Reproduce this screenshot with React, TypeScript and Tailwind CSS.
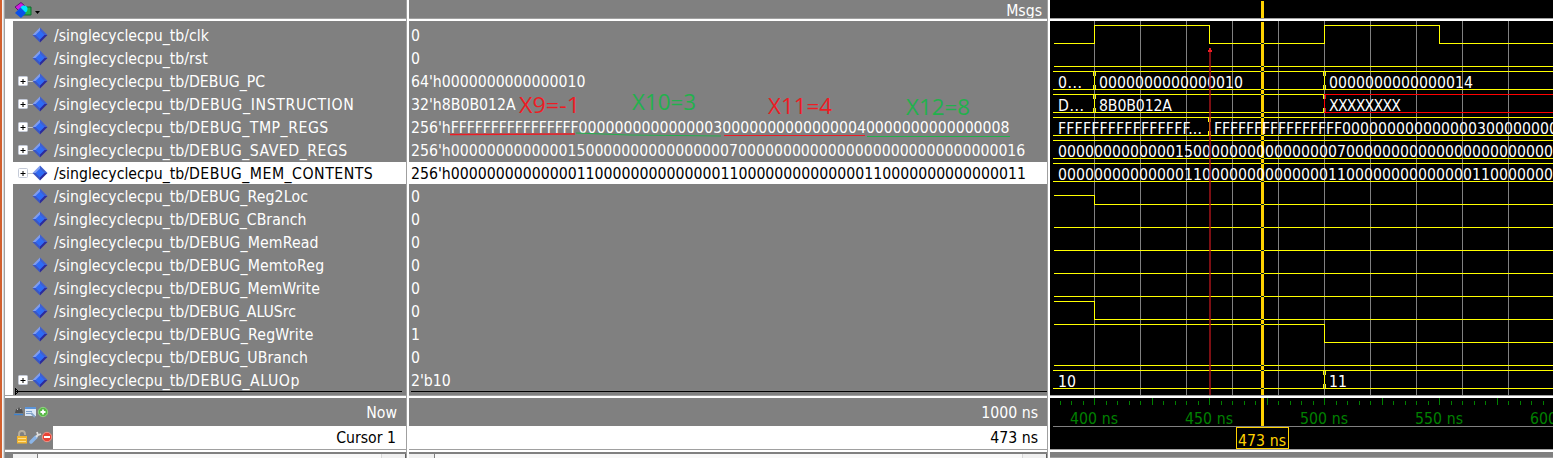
import React from "react";

const signals = [
  { name: "clk", track: "" },
  { name: "rst", track: "" },
  { name: "DEBUG_PC", track: "" },
  { name: "DEBUG_INSTRUCTION", track: "tracking-[0.64px]" },
  { name: "DEBUG_TMP_REGS", track: "tracking-[0.5px]" },
  { name: "DEBUG_SAVED_REGS", track: "tracking-[0.5px]" },
  { name: "DEBUG_MEM_CONTENTS", track: "tracking-[0.5px]" },
  { name: "DEBUG_Reg2Loc", track: "tracking-[0.12px]" },
  { name: "DEBUG_CBranch", track: "" },
  { name: "DEBUG_MemRead", track: "tracking-[0.14px]" },
  { name: "DEBUG_MemtoReg", track: "tracking-[0.14px]" },
  { name: "DEBUG_MemWrite", track: "tracking-[0.1px]" },
  { name: "DEBUG_ALUSrc", track: "" },
  { name: "DEBUG_RegWrite", track: "tracking-[0.2px]" },
  { name: "DEBUG_UBranch", track: "tracking-[0.08px]" },
  { name: "DEBUG_ALUOp", track: "tracking-[0.55px]" },
];
const word = (n: string) => n.padStart(16, "0");
const ones = "F".repeat(16);
const savedRegs = word("15").slice(1) + "0".repeat(15) + "07" + "0".repeat(30) + "16";
const memRegs = word("11").repeat(4);
const values: React.ReactNode[] = [
  "0", "0", "64'h0000000000000010", "32'h8B0B012A",
  <>256'h<span className="tracking-[-0.13px]">{ones}</span>{word("3") + word("4") + word("8")}</>,
  "256'h" + savedRegs, "256'h" + memRegs,
  "0", "0", "0", "0", "0", "0", "1", "0", "2'b10",
];
const expandable = [2, 3, 4, 5, 6, 15];

function Diamond() {
  return (
    <svg width="16" height="16" viewBox="0 0 16 16" className="-ml-px shrink-0">
      <path d="M8 .5 0.5 8 8 8z" fill="#7f9cf0" />
      <path d="M8 .5 15.5 8H8z" fill="#3f5fd0" />
      <path d="M.5 8 8 15.5V8z" fill="#3a55c4" />
      <path d="M15.5 8 8 15.5V8z" fill="#2b2a9c" />
      <path d="M8 3.5 12.5 8 8 12.5 3.5 8z" fill="#2f6bf5" />
    </svg>
  );
}

function Expander() {
  return (
    <svg width="16" height="12" viewBox="0 0 16 12" className="shrink-0">
      <rect x="0.5" y="1.5" width="9" height="9" rx="1" fill="#fff" stroke="#c5cbd8" />
      <path d="M2.500 6.500h5M5 4v5" stroke="#000" />
      <path d="M10 6.500h6" stroke="#c8c8c8" />
    </svg>
  );
}

const crossings = [22, 45, 50, 68, 73, 91, 96, 114, 119, 137, 142, 160, 183, 206, 229, 252, 275, 298, 303, 344, 349, 367];

function Wave() {
  const grid = Array.from({ length: 10 }, (_, i) => 44.5 + i * 46);
  const y = (i: number) => 23 * i;
  const bus = (i: number, key: string) => <path key={key} d={`M3 ${y(i) + 4.5}H503M3 ${y(i) + 22.5}H503`} />;
  const edge = (x: number, i: number, right = "#ff0") => (
    <g key={`${x}-${i}`}>
      <path d={`M${x} ${y(i) + 4}V${y(i) + 23}`} stroke={right} />
      <path d={`M${x - 1} ${y(i) + 5}v4M${x - 1} ${y(i) + 18}v4`} stroke="#ff0" />
      <path d={`M${x + 1} ${y(i) + 5}v4M${x + 1} ${y(i) + 18}v4`} stroke={right} />
      <path d={`M${x} ${y(i) + 5}v4M${x} ${y(i) + 18}v4`} stroke="#808080" />
    </g>
  );
  const label = (x: number, i: number, t: string, w: number) => (
    <text x={x} y={y(i) + 21} textLength={w} key={`${x}-${t}`}>{t}</text>
  );
  return (
    <svg width="503" height="374" viewBox="0 0 503 374" className="block" shapeRendering="crispEdges">
      <rect width="503" height="374" fill="#000" />
      <g stroke="#808080">{grid.map((x) => <path key={x} d={`M${x} 0V374`} />)}</g>
      <g fill="none" stroke="#ff0">
        <path d="M4 22.5H44.5V4.5H159.5V22.5H274.5V4.5H389.5V22.5H503" />
        <path d="M4 45.5H503" />
        {[2, 4, 5, 6, 15].map((i) => bus(i, `b${i}`))}
        <path d="M3 73.5H274M3 91.5H274" />
        <path d="M4 174.5H44.5V183.5H503M4 206.5H503M4 229.5H503M4 252.5H503M4 275.5H503M4 280.5H44.5V298.5H503M4 303.5H274.5V321.5H503M4 344.5H503" />
        <path d="M503 73.5H274.5V91.5H503" stroke="#f00" />
      </g>
      <path d="M212.500 1V374" stroke="#ffd200" strokeWidth="3" />
      <g fill="#001c2a">{crossings.map((c) => <rect key={c} x="211" y={c} width="3" height="1" />)}</g>
      <g fill="#fff" fontSize="15.7">
        {label(8, 2, "0...", 24)}
        {label(49, 2, word("10"), 144)}
        {label(279, 2, word("14"), 144)}
        {label(8, 3, "D...", 26)}
        {label(49, 3, "8B0B012A", 73)}
        {label(279, 3, "XXXXXXXX", 72)}
        {label(8, 4, ones + "...", 144)}
        {label(164, 4, ones, 128)}
        {label(292, 4, word("3") + "0".repeat(8), 216)}
        {label(8, 5, savedRegs.slice(0, 55), 495)}
        {label(8, 6, memRegs.slice(0, 55), 495)}
        {label(8, 15, "10", 18)}
        {label(279, 15, "11", 18)}
      </g>
      {edge(44.5, 2)}{edge(274.5, 2)}{edge(44.5, 3)}{edge(274.5, 3, "#f00")}{edge(159.5, 4)}{edge(274.5, 15)}
      <path d="M160 30V374" stroke="#b01419" strokeOpacity="0.7" strokeWidth="2" />
      <path d="M160 26 162.500 31H157.500z" fill="#ed1c24" />
    </svg>
  );
}

function Ruler() {
  const ticks = Array.from({ length: 44 }, (_, i) => i - 3);
  return (
    <svg width="503" height="51" viewBox="0 0 503 51" className="block">
      <rect width="503" height="51" fill="#000" />
      <g stroke="#008000" shapeRendering="crispEdges">
        {ticks.map((k) => (
          <path key={k} d={`M${Math.round(44 + k * 11.5) + 0.5} ${k % 5 === 0 ? 0 : 3}V7`} />
        ))}
      </g>
      <g fill="#008000" fontSize="15.7">
        <text x="20" y="26" textLength="48">400 ns</text>
        <text x="135" y="26" textLength="48">450 ns</text>
        <text x="250" y="26" textLength="48">500 ns</text>
        <text x="365" y="26" textLength="48">550 ns</text>
        <text x="480" y="26" textLength="48">600 ns</text>
      </g>
      <path d="M3 28.500H503" stroke="#808080" />
      <path d="M212.500 0V28" stroke="#ffd200" strokeWidth="3" />
      <rect x="186.500" y="29.500" width="52" height="21" fill="#000" stroke="#ffd200" />
      <text x="188" y="48" textLength="48" fill="#ffd200" fontSize="15.7">473 ns</text>
    </svg>
  );
}

function Rule() {
  return <div className="h-[3px] shrink-0 border-t border-[#a0a0a0] bg-white" />;
}

function Divider() {
  return <div className="w-[3px] shrink-0 border-l border-[#a0a0a0] bg-white" />;
}

export default function App() {
  return (
    <div className="flex h-[458px] w-[1553px] overflow-hidden bg-[#808080] text-[15.7px] leading-[22px] text-white" style={{ fontFamily: '"DejaVu Sans Condensed", "DejaVu Sans", sans-serif', fontStretch: "condensed" }}>
      <div className="flex w-[5px] shrink-0">
        <div className="w-[2px] bg-[#d2602e]" />
        <div className="w-[1px] bg-[#f5f5f5]" />
        <div className="w-[1px] bg-[#d8d8d8]" />
        <div className="w-[1px] bg-[#a0a0a0]" />
      </div>
      <div className="flex w-[401px] shrink-0 flex-col">
        <div className="flex h-[18px] shrink-0 items-start pl-[9px]">
          <svg width="30" height="18" viewBox="0 0 30 18">
            <path d="M1 7 7 2.500 11 6 5 11z" fill="#d11be0" stroke="#5e1470" />
            <path d="M10 7h7v8h-8z" fill="#22b14c" stroke="#0b6a2c" />
            <circle cx="10" cy="9" r="3.500" fill="#00e5ff" />
            <path d="M6.500 7.500 12 13 7 18 1 13z" fill="#0a50e8" />
            <path d="M21 11h5l-2.500 3z" fill="#000" />
          </svg>
        </div>
        <Rule />
        <div className="flex h-[374px] shrink-0">
          <div className="w-[8px] bg-white" />
          <div className="flex grow flex-col pt-[3px]">
            {signals.map(({ name, track }, i) => (
              <div key={name} className={`mb-px flex h-[22px] items-center pl-[5px] whitespace-pre ${i === 6 ? "bg-white text-black" : ""}`}>
                <div className="flex w-[15px] shrink-0">{expandable.includes(i) && <Expander />}</div>
                <Diamond />
                <span className="pt-[2px] pl-[6px]">/singlecyclecpu_tb/<span className={track}>{name}</span></span>
              </div>
            ))}
            <svg width="393" height="3" viewBox="0 0 393 3" className="-mt-[1px] overflow-visible" shapeRendering="crispEdges">
              <path d="M2 .5H389" stroke="#000" />
              <path d="M2.500-2.500v6l3-3z" fill="none" stroke="#000" />
            </svg>
          </div>
        </div>
        <Rule />
        <div className="flex h-[28px] shrink-0 items-center justify-between pr-[9px] pl-[9px]">
          <svg width="36" height="14" viewBox="0 0 36 14">
            <path d="M1 8 2 4h2l1-2 1 2h2l1 4z" fill="#505050" />
            <path d="M3 4.500h1M6 3.500h1" stroke="#bbb" />
            <path d="M0 9.500h9" stroke="#3b83d3" strokeWidth="1.300" />
            <rect x="11" y="2" width="11" height="9" fill="#dce8f6" />
            <path d="M11 3h11" stroke="#5c94d8" strokeWidth="2" />
            <path d="M12 6.500h6M12 8.500h5" stroke="#7da0cc" />
            <path d="m17 8 4 4" stroke="#86a5c9" strokeWidth="2" />
            <circle cx="29" cy="7" r="4.700" fill="#58b947" stroke="#93d184" />
            <path d="M26.500 7h5M29 4.500v5" stroke="#fff" strokeWidth="1.800" />
          </svg>
          <span className="pt-[2px]">Now</span>
        </div>
        <div className="flex h-[23px] shrink-0">
          <svg width="48" height="23" viewBox="0 0 48 23">
            <path d="M14 11V8c0-4 6-4 6 0v1" fill="none" stroke="#b8b0a0" strokeWidth="1.800" />
            <rect x="12" y="10" width="10" height="7.500" fill="#f1b42f" />
            <path d="M13 12.500h8M13 15.500h8" stroke="#ffe08a" />
            <path d="m26 16 5-5" stroke="#8bb5e8" strokeWidth="3.500" strokeLinecap="round" />
            <path d="m31 11 2-2M32 6l1 3 3-1" stroke="#dedede" strokeWidth="1.800" fill="none" />
            <circle cx="42" cy="11" r="4.700" fill="#e74336" stroke="#f09589" />
            <path d="M39 11h6" stroke="#fff" strokeWidth="2" />
          </svg>
          <div className="flex grow items-center justify-end bg-white pt-px pr-[10px] text-black">Cursor 1</div>
        </div>
        <Rule />
        <div className="flex h-[6px] shrink-0 pt-[2px] pl-[8px]">
          <div className="w-[25px] border-r border-[#808080] bg-[#f0f0f0]" />
          <div className="grow bg-[#f8f8f8]" />
          <div className="w-[25px] border-r border-l border-r-[#606060] border-l-[#d8d8d8] bg-[#f0f0f0]" />
        </div>
      </div>
      <Divider />
      <div className="flex w-[638px] shrink-0 flex-col">
        <div className="h-[18px] shrink-0 pr-[5px] text-right leading-[21px]">Msgs</div>
        <Rule />
        <div className="relative flex h-[374px] shrink-0 flex-col pt-[3px]">
          {values.map((v, i) => (
            <div key={signals[i].name} className={`mb-px h-[22px] pt-px pl-[2px] whitespace-pre ${i === 6 ? "bg-white tracking-[0.01px] text-black" : ""}`}>{v}</div>
          ))}
          <div className="-mt-px ml-[2px] h-px shrink-0 bg-black" />
          <div className="absolute inset-0 text-[21px]" style={{ fontFamily: '"Open Sans", "Noto Sans", sans-serif', fontStretch: "normal" }}>
            <svg width="638" height="374" viewBox="0 0 638 374">
              <g fill="#ed1c24">
                <text x="110" y="92" textLength="61" lengthAdjust="spacingAndGlyphs">X9=-1</text>
                <text x="359" y="93" textLength="64" lengthAdjust="spacingAndGlyphs">X11=4</text>
              </g>
              <g fill="#22b14c">
                <text x="223" y="89" textLength="64" lengthAdjust="spacingAndGlyphs">X10=3</text>
                <text x="497" y="94" textLength="64" lengthAdjust="spacingAndGlyphs">X12=8</text>
              </g>
              <path d="M41 113.500 166 113" stroke="#ed1c24" strokeWidth="1.500" />
              <path d="M167 112 220 114 312 115" stroke="#22b14c" fill="none" />
              <path d="M315 114.500H456" stroke="#ed1c24" />
              <path d="M458 115.500H601" stroke="#22b14c" />
            </svg>
          </div>
        </div>
        <Rule />
        <div className="flex h-[28px] shrink-0 items-center justify-end pt-[2px] pr-[9px]">1000 ns</div>
        <div className="flex h-[23px] shrink-0 items-center justify-end bg-white pt-px pr-[9px] text-black">473 ns</div>
        <Rule />
        <div className="flex h-[6px] shrink-0 pt-[2px]">
          <div className="w-[26px] border-r border-[#808080] bg-[#f0f0f0]" />
          <div className="grow bg-[#f8f8f8]" />
          <div className="w-[25px] border-r border-l border-r-[#606060] border-l-[#d8d8d8] bg-[#f0f0f0]" />
        </div>
      </div>
      <Divider />
      <div className="flex w-[503px] shrink-0 flex-col">
        <div className="flex h-[18px] shrink-0 bg-black pt-px pl-[211px]"><div className="w-[3px] bg-[#ffd200]" /></div>
        <Rule />
        <Wave />
        <Rule />
        <Ruler />
        <Rule />
        <div className="mt-[5px] h-px bg-[#a0a0a0]" />
      </div>
    </div>
  );
}
